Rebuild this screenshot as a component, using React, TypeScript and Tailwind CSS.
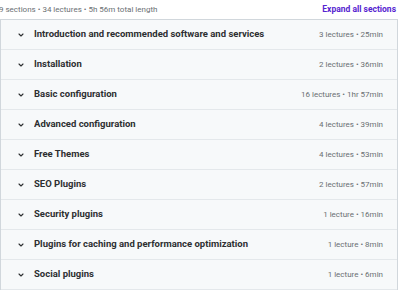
import React from "react";

const sections = [
  ["Introduction and recommended software and services", "3 lectures • 25min"],
  ["Installation", "2 lectures • 36min"],
  ["Basic configuration", "16 lectures • 1hr 57min"],
  ["Advanced configuration", "4 lectures • 39min"],
  ["Free Themes", "4 lectures • 53min"],
  ["SEO Plugins", "2 lectures • 57min"],
  ["Security plugins", "1 lecture • 16min"],
  ["Plugins for caching and performance optimization", "1 lecture • 8min"],
  ["Social plugins", "1 lecture • 6min"],
];

function Chevron() {
  return (
    <svg width="8" height="8" viewBox="0 0 8 8" className="shrink-0">
      <path d="M2 3 L4 5 L6 3" fill="none" stroke="#2d2f31" strokeWidth="1.1" strokeLinecap="round" strokeLinejoin="round" />
    </svg>
  );
}

export default function App() {
  return (
    <div className="w-[400px] h-[293px] bg-white overflow-hidden" style={{ fontFamily: "Roboto, 'Noto Sans', sans-serif" }}>
      <div className="flex items-center justify-between h-[19px] pr-[4px] -ml-[1px]">
        <span className="text-[8px] text-[#6a6f73]">9 sections • 34 lectures • 5h 56m total length</span>
        <span className="text-[8.5px] font-bold text-[#5624d0]">Expand all sections</span>
      </div>
      <div className="w-[398px] border border-[#d1d7dc] border-b-0">
        {sections.map(([t, m]) => (
          <div key={t} className="h-[30px] flex items-center bg-[#f7f9fa] border-b border-[#e4e8eb] pl-[16px] pr-[14px]">
            <Chevron />
            <span className="ml-[9px] text-[9.5px] font-bold text-[#2d2f31] flex-1 truncate">{t}</span>
            <span className="text-[8px] text-[#6a6f73]">{m}</span>
          </div>
        ))}
      </div>
    </div>
  );
}
